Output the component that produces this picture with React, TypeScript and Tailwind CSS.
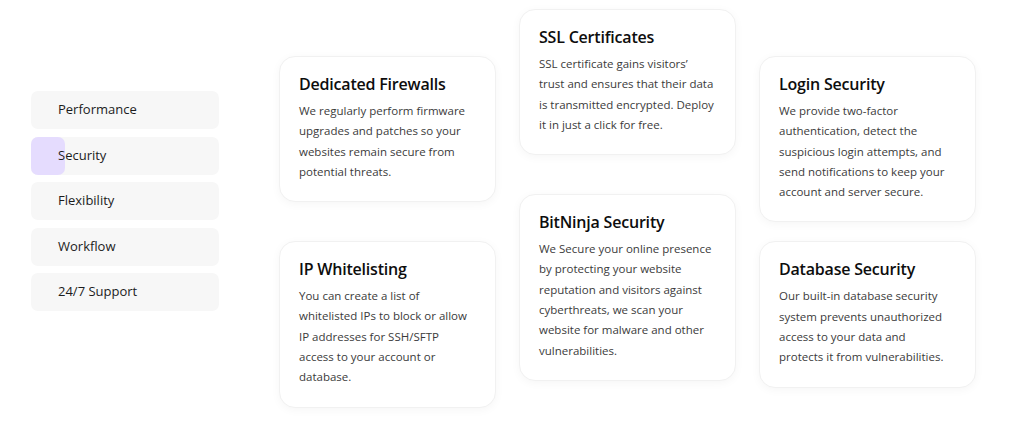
import React from 'react';

interface Feature {
  title: string;
  lines: string[];
}

const columns: { pad: string; gap: string; items: Feature[] }[] = [
  {
    pad: 'pt-[56px]',
    gap: 'gap-[39px]',
    items: [
      {
        title: 'Dedicated Firewalls',
        lines: ['We regularly perform firmware', 'upgrades and patches so your', 'websites remain secure from', 'potential threats.'],
      },
      {
        title: 'IP Whitelisting',
        lines: ['You can create a list of', 'whitelisted IPs to block or allow', 'IP addresses for SSH/SFTP', 'access to your account or', 'database.'],
      },
    ],
  },
  {
    pad: 'pt-[9px]',
    gap: 'gap-[39px]',
    items: [
      {
        title: 'SSL Certificates',
        lines: ['SSL certificate gains visitors\u2019', 'trust and ensures that their data', 'is transmitted encrypted. Deploy', 'it in just a click for free.'],
      },
      {
        title: 'BitNinja Security',
        lines: [
          'We Secure your online presence',
          'by protecting your website',
          'reputation and visitors against',
          'cyberthreats, we scan your',
          'website for malware and other',
          'vulnerabilities.',
        ],
      },
    ],
  },
  {
    pad: 'pt-[56px]',
    gap: 'gap-[19px]',
    items: [
      {
        title: 'Login Security',
        lines: ['We provide two-factor', 'authentication, detect the', 'suspicious login attempts, and', 'send notifications to keep your', 'account and server secure.'],
      },
      {
        title: 'Database Security',
        lines: ['Our built-in database security', 'system prevents unauthorized', 'access to your data and', 'protects it from vulnerabilities.'],
      },
    ],
  },
];

const tabs = ['Performance', 'Security', 'Flexibility', 'Workflow', '24/7 Support'];

const FeatureCard: React.FC<{ item: Feature }> = ({ item }) => (
  <div className="w-[217px] rounded-[16px] border border-[#f1f1f1] bg-white px-[19px] pt-[16px] pb-[19px] shadow-[0_2px_10px_rgba(0,0,0,0.04)]">
    <h3 className="text-[16px] leading-[22px] font-semibold text-[#0d0d0d] tracking-[-0.2px]">{item.title}</h3>
    <p className="mt-[6px] text-[11.5px] leading-[20.3px] text-[#3b3b3b]">
      {item.lines.map((l) => (
        <span key={l} className="block whitespace-nowrap">
          {l}
        </span>
      ))}
    </p>
  </div>
);

export default function App() {
  return (
    <div className="w-[1024px] h-[430px] bg-white flex font-['Open_Sans',sans-serif] overflow-hidden">
      <div className="w-[188px] ml-[31px] pt-[91px] flex flex-col gap-[7.5px]">
        {tabs.map((t) => (
          <div key={t} className="relative h-[38px] rounded-[7px] bg-[#f7f7f7] flex items-center pl-[27px]">
            {t === 'Security' && (
              <span className="absolute left-0 top-0 h-[38px] w-[34px] rounded-[7px] bg-[#e5dcfe]" />
            )}
            <span className="relative text-[13px] font-medium text-[#1c1c1c]">{t}</span>
          </div>
        ))}
      </div>
      <div className="ml-[60px] flex gap-[23px]">
        {columns.map((c, i) => (
          <div key={i} className={`flex flex-col ${c.pad} ${c.gap}`}>
            {c.items.map((it) => (
              <FeatureCard key={it.title} item={it} />
            ))}
          </div>
        ))}
      </div>
    </div>
  );
}
